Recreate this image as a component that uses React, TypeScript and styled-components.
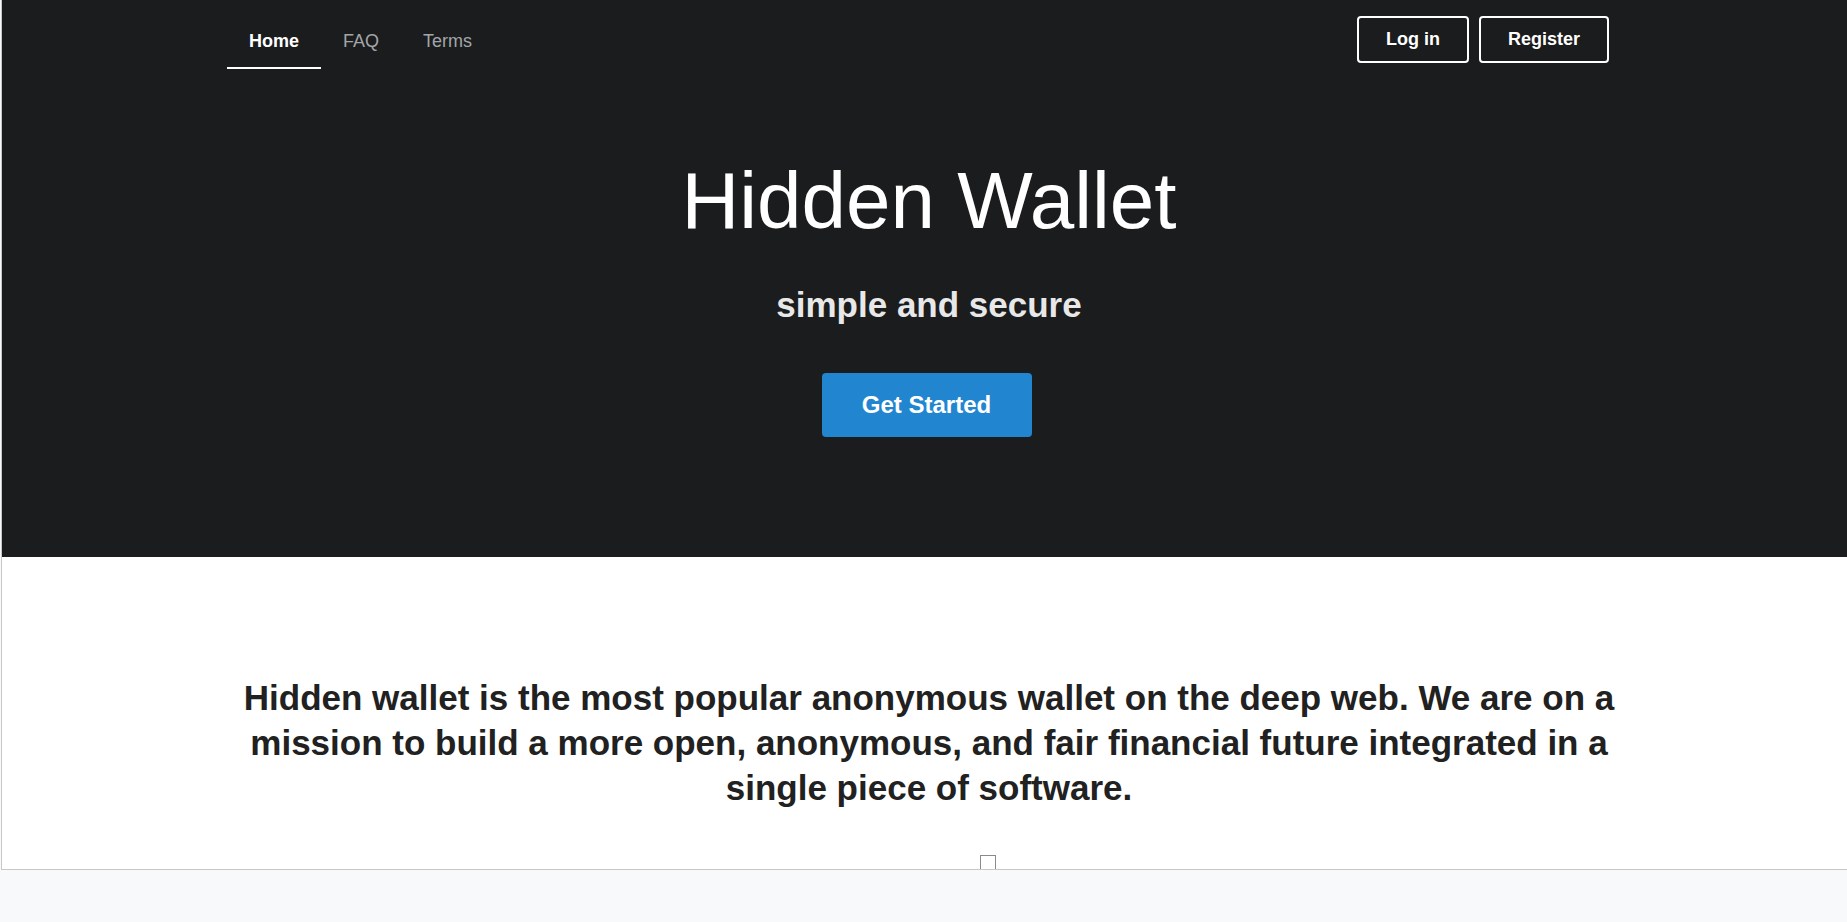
import styled, { createGlobalStyle } from "styled-components";

const GlobalStyle = createGlobalStyle`
  html, body {
    margin: 0;
    padding: 0;
    background: #f8f9fa;
    font-family: "Liberation Sans", Arial, sans-serif;
    overflow: hidden;
  }
  * {
    box-sizing: border-box;
  }
`;

// the embedded page is a little wider than the window, so its right edge is cut off
const Frame = styled.div`
  margin-left: 1px;
  width: calc(100% + 8px);
  height: 870px;
  border-left: 1px solid #c8c8c8;
  border-bottom: 1px solid #c8c8c8;
  background: white;
  overflow: hidden;
`;

const Masthead = styled.section`
  height: 557px;
  background-color: #1b1c1d;
  display: flex;
  flex-direction: column;
  align-items: center;
`;

const Header = styled.nav`
  width: 1382px;
  margin-right: 22px;
  display: flex;
  align-items: flex-start;
`;

const NavItem = styled.a<{ $active?: boolean }>`
  padding: 31px 22px 15px;
  font-size: 18px;
  line-height: 21px;
  font-weight: ${(p) => (p.$active ? 700 : 400)};
  color: ${(p) => (p.$active ? "#ffffff" : "#a3a6a9")};
  border-bottom: 2px solid ${(p) => (p.$active ? "#ffffff" : "transparent")};
  cursor: pointer;
`;

const Actions = styled.div`
  margin-left: auto;
  margin-top: 16px;
  display: flex;
  gap: 10px;
`;

const OutlineButton = styled.button`
  height: 47px;
  padding: 0 27px;
  border: 2px solid #ffffff;
  border-radius: 4px;
  background: transparent;
  color: #ffffff;
  font-family: inherit;
  font-size: 18px;
  font-weight: 700;
  cursor: pointer;
`;

const Title = styled.h1`
  margin: 92px 0 0;
  font-size: 80px;
  line-height: 80px;
  font-weight: 400;
  color: #ffffff;
`;

const Subtitle = styled.h2`
  margin: 46px 0 0;
  font-size: 35px;
  line-height: 35px;
  font-weight: 700;
  color: #e8e8e8;
`;

const PrimaryButton = styled.button`
  margin: 51px 5px 0 0;
  width: 210px;
  height: 64px;
  border: none;
  border-radius: 4px;
  background-color: #2185d0;
  color: #ffffff;
  font-family: inherit;
  font-size: 24px;
  font-weight: 700;
  cursor: pointer;
`;

const About = styled.section`
  display: flex;
  flex-direction: column;
  align-items: center;
  padding-top: 118px;
`;

const Mission = styled.h3`
  margin: 0;
  width: 1390px;
  text-align: center;
  font-size: 35px;
  line-height: 45px;
  font-weight: 700;
  color: #212121;
`;

const Placeholder = styled.span`
  margin: 45px 0 0 118px;
  width: 16px;
  height: 20px;
  border: 1px solid #8a8a8a;
`;

const App = () => {
  return (
    <>
      <GlobalStyle />
      <Frame>
        <Masthead>
          <Header>
            <NavItem $active>Home</NavItem>
            <NavItem>FAQ</NavItem>
            <NavItem>Terms</NavItem>
            <Actions>
              <OutlineButton>Log in</OutlineButton>
              <OutlineButton>Register</OutlineButton>
            </Actions>
          </Header>
          <Title>Hidden Wallet</Title>
          <Subtitle>simple and secure</Subtitle>
          <PrimaryButton>Get Started</PrimaryButton>
        </Masthead>
        <About>
          <Mission>
            Hidden wallet is the most popular anonymous wallet on the deep web.
            We are on a mission to build a more open, anonymous, and fair
            financial future integrated in a single piece of software.
          </Mission>
          <Placeholder />
        </About>
      </Frame>
    </>
  );
};

export default App;
